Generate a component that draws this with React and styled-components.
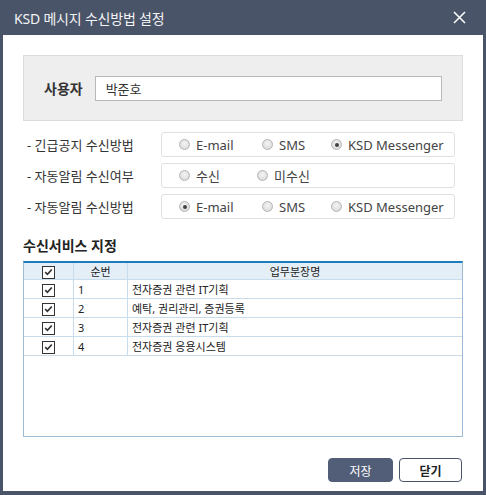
import styled, { createGlobalStyle } from "styled-components";

const GlobalStyle = createGlobalStyle`
  html, body {
    margin: 0;
    padding: 0;
    background: #4a5468;
  }
  body {
    font-family: "Noto Sans", "Noto Sans CJK KR", sans-serif;
    color: #333;
  }
`;

const rows = [
  { label: "- 긴급공지 수신방법", options: ["E-mail", "SMS", "KSD Messenger"], widths: [83, 69], checked: 2 },
  { label: "- 자동알림 수신여부", options: ["수신", "미수신"], widths: [78, 80], checked: -1 },
  { label: "- 자동알림 수신방법", options: ["E-mail", "SMS", "KSD Messenger"], widths: [83, 69], checked: 0 },
];

const services = [
  { no: 1, name: "전자증권 관련 IT기획" },
  { no: 2, name: "예탁, 권리관리, 증권등록" },
  { no: 3, name: "전자증권 관련 IT기획" },
  { no: 4, name: "전자증권 응용시스템" },
];

export default function App() {
  return (
    <>
      <GlobalStyle />
      <Frame>
        <TitleBar>
          <Title>KSD 메시지 수신방법 설정</Title>
          <Close>
            <svg width="13" height="13" viewBox="0 0 13 13">
              <path d="M1 1L12 12M12 1L1 12" stroke="#fff" strokeWidth="1.5" />
            </svg>
          </Close>
        </TitleBar>
        <Body>
          <UserBox>
            <UserLabel>사용자</UserLabel>
            <UserInput defaultValue="박준호" />
          </UserBox>
          <Options>
            {rows.map((r) => (
              <OptionRow key={r.label}>
                <RowLabel>{r.label}</RowLabel>
                <RadioGroup>
                  {r.options.map((o, i) => (
                    <RadioItem key={o} $w={r.widths[i]}>
                      <Radio $on={i === r.checked} />
                      {o}
                    </RadioItem>
                  ))}
                </RadioGroup>
              </OptionRow>
            ))}
          </Options>
          <SectionTitle>수신서비스 지정</SectionTitle>
          <TableWrap>
            <Table>
              <thead>
                <tr>
                  <Th $w={49}><Check /></Th>
                  <Th $w={53}>순번</Th>
                  <Th>업무분장명</Th>
                </tr>
              </thead>
              <tbody>
                {services.map((s) => (
                  <tr key={s.no}>
                    <Td $center><Check /></Td>
                    <Td>{s.no}</Td>
                    <Td>{s.name}</Td>
                  </tr>
                ))}
              </tbody>
            </Table>
          </TableWrap>
          <Buttons>
            <Button $primary>저장</Button>
            <Button>닫기</Button>
          </Buttons>
        </Body>
      </Frame>
    </>
  );
}

function Check() {
  return (
    <CheckBox>
      <svg width="9" height="8" viewBox="0 0 9 8">
        <path d="M1.2 4.2L3.4 6.3L7.8 1.5" fill="none" stroke="#333" strokeWidth="1.7" />
      </svg>
    </CheckBox>
  );
}

const Frame = styled.div`
  width: 486px;
  height: 495px;
  box-sizing: border-box;
  padding: 0 3px 4px 3px;
  display: flex;
  flex-direction: column;
  background: #4a5468;
`;

const TitleBar = styled.div`
  height: 35px;
  display: flex;
  align-items: center;
  justify-content: space-between;
  padding: 0 17px 0 11px;
`;

const Title = styled.div`
  color: #f2f3f5;
  font-size: 14px;
  letter-spacing: -0.2px;
`;

const Close = styled.div`
  display: flex;
  align-items: center;
`;

const Body = styled.div`
  flex: 1;
  background: #fff;
  display: flex;
  flex-direction: column;
  padding: 20px 20px 0 20px;
`;

const UserBox = styled.div`
  height: 66px;
  box-sizing: border-box;
  background: #eeeeee;
  border: 1px solid #dcdcdc;
  display: flex;
  align-items: center;
  padding: 0 20px 0 20px;
  gap: 12px;
`;

const UserLabel = styled.div`
  font-size: 14px;
  font-weight: 700;
  color: #333;
`;

const UserInput = styled.input`
  flex: 1;
  height: 25px;
  box-sizing: border-box;
  border: 1px solid #b8b8b8;
  padding: 0 10px;
  font-family: "Noto Sans CJK KR", sans-serif;
  font-size: 13px;
  color: #333;
  outline: none;
`;

const Options = styled.div`
  display: flex;
  flex-direction: column;
  gap: 6px;
  margin-top: 11px;
`;

const OptionRow = styled.div`
  display: flex;
  align-items: center;
  padding-left: 4px;
`;

const RowLabel = styled.div`
  width: 134px;
  font-size: 13px;
  color: #333;
  white-space: nowrap;
`;

const RadioGroup = styled.div`
  width: 294px;
  height: 25px;
  box-sizing: border-box;
  border: 1px solid #e0e0e0;
  border-radius: 3px;
  display: flex;
  align-items: center;
  padding-left: 17px;
`;

const RadioItem = styled.label`
  display: flex;
  align-items: center;
  gap: 6px;
  font-size: 13px;
  color: #444;
  white-space: nowrap;
  width: ${({ $w }) => ($w ? `${$w}px` : "auto")};
  flex: none;
`;

const Radio = styled.span`
  width: 11px;
  height: 11px;
  box-sizing: border-box;
  border-radius: 50%;
  border: 1px solid #b5b5b5;
  background: radial-gradient(circle at 50% 40%, #f4f4f4, #d4d4d4);
  position: relative;
  flex: none;
  &::after {
    content: "";
    display: ${({ $on }) => ($on ? "block" : "none")};
    position: absolute;
    left: 2.5px;
    top: 2.5px;
    width: 4px;
    height: 4px;
    border-radius: 50%;
    background: #444;
  }
`;

const SectionTitle = styled.div`
  margin-top: 16px;
  font-size: 14px;
  font-weight: 700;
  color: #222;
`;

const TableWrap = styled.div`
  margin-top: 6px;
  height: 176px;
  box-sizing: border-box;
  border: 1px solid #9dbbd6;
  border-top: 2px solid #1f7bc0;
`;

const Table = styled.table`
  width: 100%;
  border-collapse: collapse;
  font-size: 11px;
  color: #222;
  tr td:first-child, tr th:first-child {
    border-left: none;
  }
  tr td:last-child, tr th:last-child {
    border-right: none;
  }
`;

const Th = styled.th`
  width: ${({ $w }) => ($w ? `${$w}px` : "auto")};
  height: 16px;
  background: #e4eef7;
  border: 1px solid #c9dcec;
  border-top: none;
  font-weight: 400;
  text-align: center;
  padding: 0;
  vertical-align: middle;
`;

const Td = styled.td`
  height: 18px;
  border: 1px solid #c9dcec;
  padding: 0 4px;
  text-align: ${({ $center }) => ($center ? "center" : "left")};
  vertical-align: middle;
`;

const CheckBox = styled.span`
  display: inline-flex;
  align-items: center;
  justify-content: center;
  width: 11px;
  height: 11px;
  border: 1px solid #333;
  background: #fff;
  vertical-align: middle;
`;

const Buttons = styled.div`
  display: flex;
  justify-content: flex-end;
  gap: 6px;
  margin-top: 21px;
  padding-right: 1px;
`;

const Button = styled.button`
  height: 24px;
  width: ${({ $primary }) => ($primary ? "65px" : "63px")};
  border-radius: 4px;
  border: 1px solid ${({ $primary }) => ($primary ? "#525e78" : "#4a5468")};
  background: ${({ $primary }) => ($primary ? "#525e78" : "#fff")};
  color: ${({ $primary }) => ($primary ? "#fff" : "#222")};
  font-family: "Noto Sans CJK KR", sans-serif;
  font-size: 12px;
  font-weight: ${({ $primary }) => ($primary ? 400 : 700)};
  padding: 0;
`;
